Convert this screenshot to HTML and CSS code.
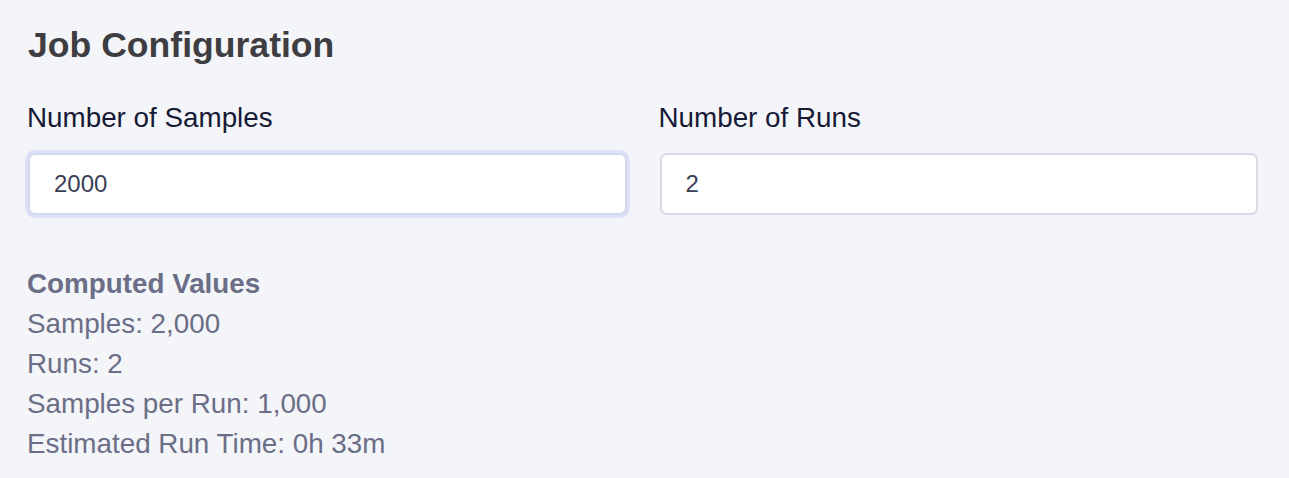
FILE: index.html
```html
<!DOCTYPE html>
<html>
<head>
<meta charset="utf-8">
<link rel="stylesheet" href="styles.css">
</head>
<body>
<div class="page">
  <h1 class="title">Job Configuration</h1>
  <div class="fields">
    <div class="field">
      <label class="label" for="samples">Number of Samples</label>
      <input class="input input-focus" id="samples" type="text" value="2000">
    </div>
    <div class="field">
      <label class="label" for="runs">Number of Runs</label>
      <input class="input" id="runs" type="text" value="2">
    </div>
  </div>
  <div class="computed">
    <div class="computed-title">Computed Values</div>
    <div class="computed-line">Samples: 2,000</div>
    <div class="computed-line">Runs: 2</div>
    <div class="computed-line">Samples per Run: 1,000</div>
    <div class="computed-line">Estimated Run Time: 0h 33m</div>
  </div>
</div>
</body>
</html>
```

FILE: styles.css
```css
html, body {
  margin: 0;
  padding: 0;
  background: #f4f5f9;
}

.page {
  font-family: "Liberation Sans", Arial, sans-serif;
  padding: 24px 31px 0 28px;
}

.title {
  margin: 0;
  font-size: 35.6px;
  line-height: 42px;
  font-weight: 700;
  color: #3d3d42;
}

.fields {
  display: grid;
  grid-template-columns: 1fr 1fr;
  column-gap: 33px;
  margin-top: 32px;
}

.field {
  display: flex;
  flex-direction: column;
}

.label {
  font-size: 27.8px;
  line-height: 40px;
  color: #161a36;
  margin-left: -1px;
}

.input {
  margin-top: 15px;
  height: 62px;
  box-sizing: border-box;
  border: 2px solid #d8d9e3;
  border-radius: 7px;
  background: #ffffff;
  padding: 0 24px;
  font-family: "Liberation Sans", Arial, sans-serif;
  font-size: 24px;
  color: #384056;
  outline: none;
}

.input-focus {
  border-color: #d5d8ea;
  box-shadow: 0 0 0 3px #dde1f8;
}

.computed {
  margin-top: 49px;
  margin-left: -1px;
  font-size: 27.8px;
  line-height: 40px;
  color: #6b6e86;
}

.computed-title {
  font-weight: 700;
}
```
